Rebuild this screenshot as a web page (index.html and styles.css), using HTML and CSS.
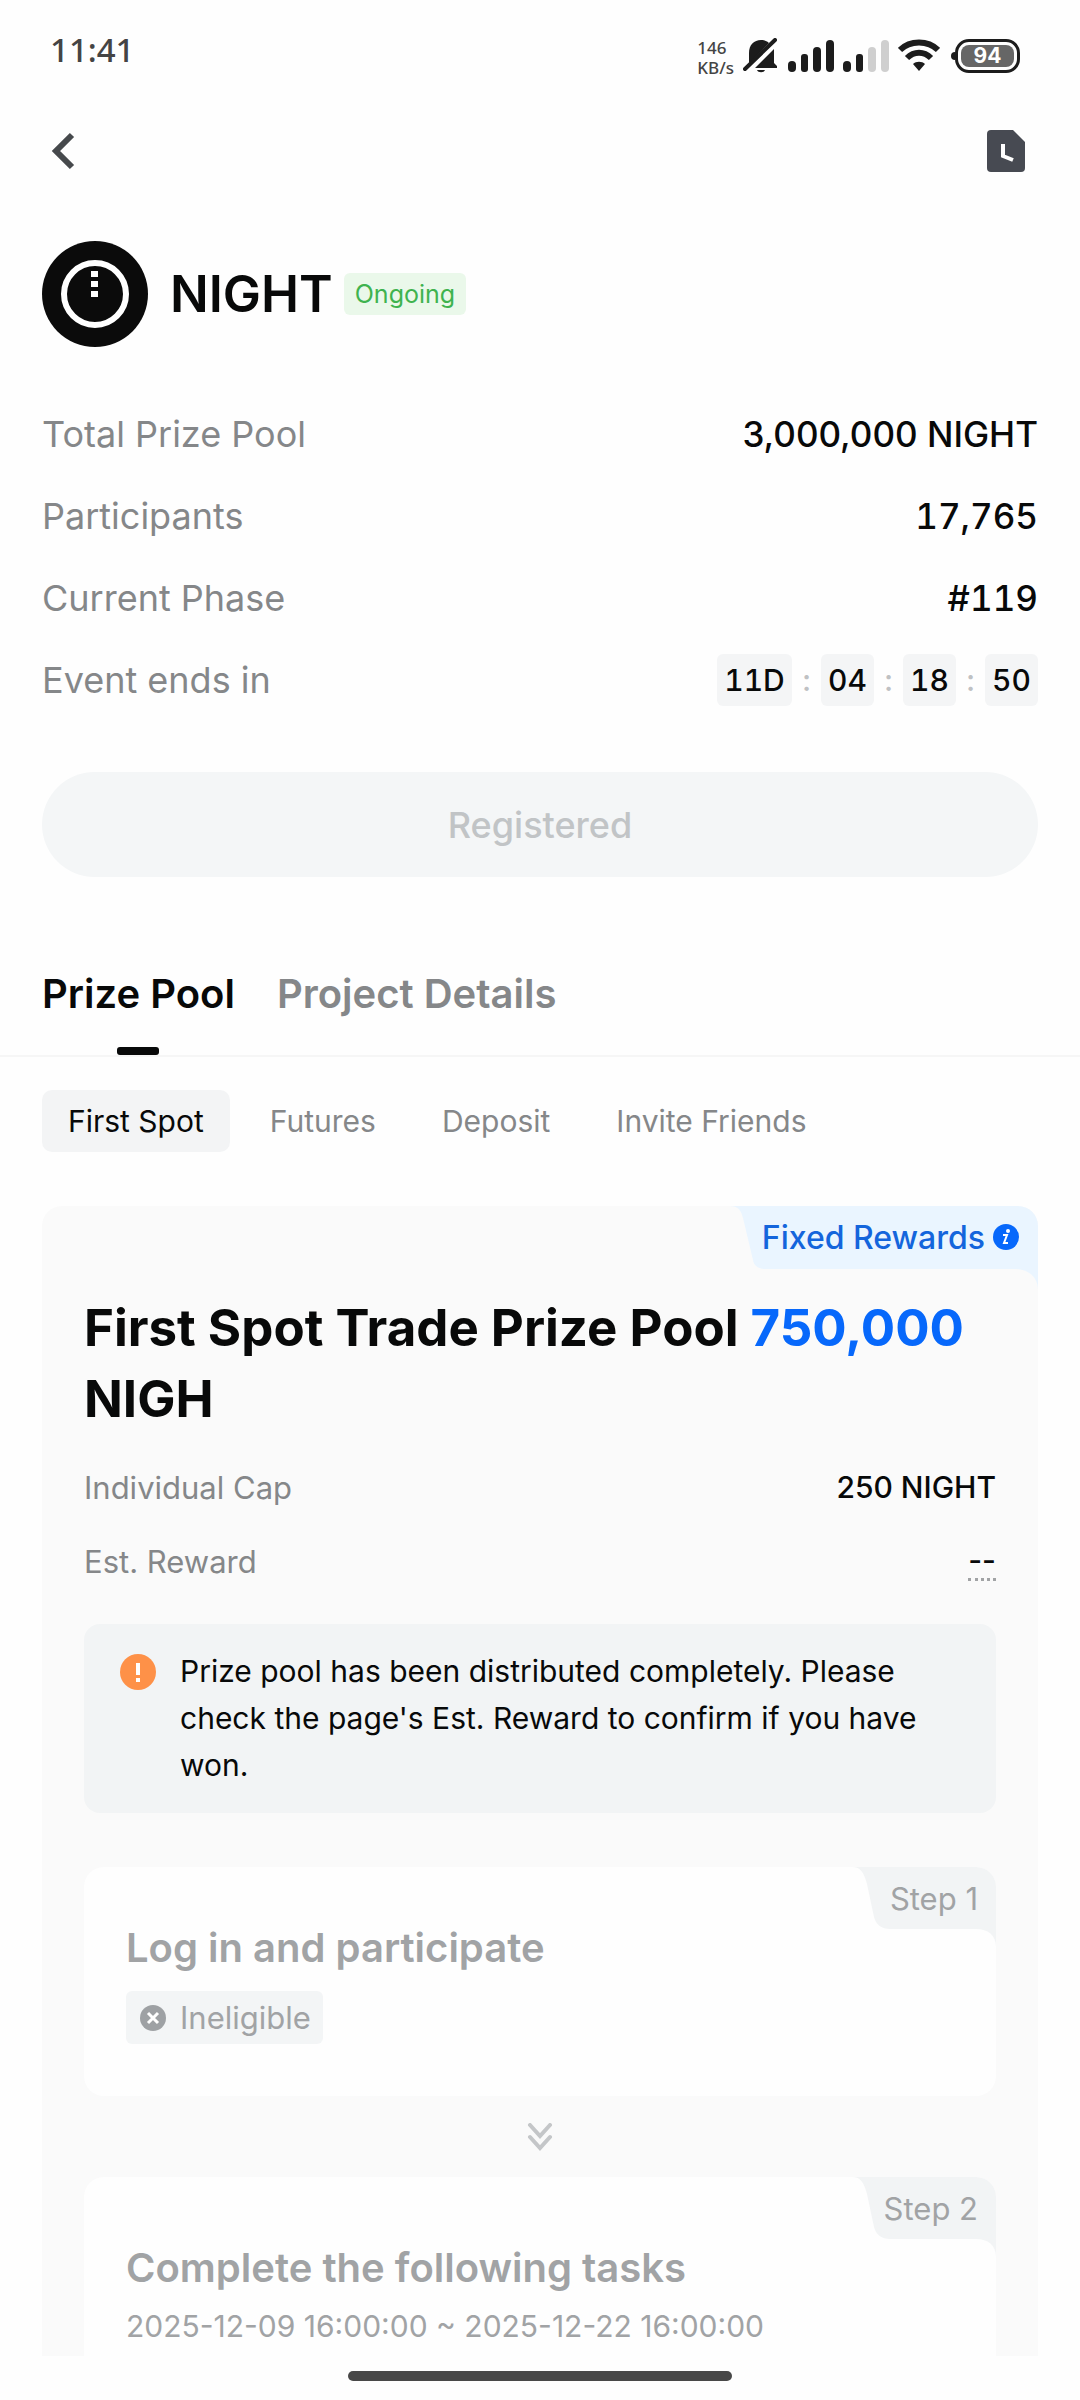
FILE: index.html
```html
<!DOCTYPE html>
<html lang="en">
<head>
  <meta charset="utf-8">
  <meta name="viewport" content="width=device-width, initial-scale=1">
  <title>NIGHT prize pool</title>
  <link rel="stylesheet" href="styles.css">
</head>
<body>
  <header class="status-bar">
    <time class="clock">11:41</time>
    <div class="status-icons">
      <div class="net-speed"><span>146</span><span>KB/s</span></div>
      <svg class="icon-bell" width="36" height="36" viewBox="0 0 36 36" fill="#1c1c1c">
        <path d="M6 26V15C6 7 11 2 18 2c3 0 6 1 8 3L6 26ZM31 11v14l3 3v2H12L31 11ZM14 32h8c-1 3-7 3-8 0Z"/>
        <path d="M2 31 32 2" stroke="#1c1c1c" stroke-width="4" stroke-linecap="round"/>
      </svg>
      <svg class="icon-signal" width="46" height="34" viewBox="0 0 46 34" fill="#1c1c1c">
        <rect x="0" y="22" width="8" height="11" rx="4"/><rect x="13" y="15" width="7" height="18" rx="3"/><rect x="25" y="8" width="8" height="25" rx="4"/><rect x="38" y="1" width="8" height="32" rx="4"/>
      </svg>
      <svg class="icon-signal" width="46" height="34" viewBox="0 0 46 34" fill="#1c1c1c">
        <rect x="0" y="22" width="8" height="11" rx="4"/><rect x="13" y="15" width="7" height="18" rx="3"/><rect x="25" y="8" width="8" height="25" rx="4" fill="#cfcfcf"/><rect x="38" y="1" width="8" height="32" rx="4" fill="#cfcfcf"/>
      </svg>
      <svg class="icon-wifi" width="42" height="34" viewBox="0 0 42 34" fill="none" stroke="#1c1c1c" stroke-width="6">
        <path d="M2 11C12 1 30 1 40 11"/><path d="M9 19C16 12 26 12 33 19"/>
        <path d="M15 25c3-3 9-3 12 0l-6 7Z" fill="#1c1c1c" stroke="none"/>
      </svg>
      <div class="battery"><span>94</span></div>
    </div>
  </header>

  <nav class="nav-bar" aria-label="Page">
    <button class="icon-button" type="button" aria-label="Back">
      <svg width="24" height="38" viewBox="0 0 24 38" fill="none" stroke="#46494c" stroke-width="6"><path d="M21 3 5 19l16 16"/></svg>
    </button>
    <button class="icon-button" type="button" aria-label="History">
      <svg width="38" height="42" viewBox="0 0 38 42"><path d="M4 0h22l12 12v26a4 4 0 0 1-4 4H4a4 4 0 0 1-4-4V4a4 4 0 0 1 4-4Z" fill="#474a52"/><path d="M16 14v12l10 4" fill="none" stroke="#fff" stroke-width="4"/></svg>
    </button>
  </nav>

  <main class="page">
    <section class="project">
      <svg class="logo" width="106" height="106" viewBox="0 0 106 106" aria-hidden="true">
        <circle cx="53" cy="53" r="53" fill="#0b0b0b"/>
        <circle cx="53" cy="53" r="31" fill="none" stroke="#fff" stroke-width="6"/>
        <path d="M49 30h7v6h-7zM49 40h7v6h-7zM49 50h7v6h-7z" fill="#fff"/>
      </svg>
      <h1 class="project-name">NIGHT</h1>
      <span class="tag-ongoing">Ongoing</span>
    </section>

    <dl class="stats">
      <div class="stat"><dt>Total Prize Pool</dt><dd>3,000,000 NIGHT</dd></div>
      <div class="stat"><dt>Participants</dt><dd class="count">17,765</dd></div>
      <div class="stat"><dt>Current Phase</dt><dd class="count">#119</dd></div>
      <div class="stat"><dt>Event ends in</dt>
        <dd class="countdown count"><span class="unit unit-days">11D</span><i>:</i><span class="unit">04</span><i>:</i><span class="unit">18</span><i>:</i><span class="unit">50</span></dd>
      </div>
    </dl>

    <button class="register" type="button" disabled>Registered</button>

    <div class="tabs" role="tablist">
      <button class="tab tab-active" type="button" role="tab" aria-selected="true">Prize Pool</button>
      <button class="tab" type="button" role="tab" aria-selected="false">Project Details</button>
    </div>

    <div class="subtabs" role="tablist">
      <button class="subtab subtab-active" type="button" role="tab" aria-selected="true">First Spot</button>
      <button class="subtab" type="button" role="tab" aria-selected="false">Futures</button>
      <button class="subtab" type="button" role="tab" aria-selected="false">Deposit</button>
      <button class="subtab" type="button" role="tab" aria-selected="false">Invite Friends</button>
    </div>

    <section class="pool">
      <div class="corner corner-fixed">
        <svg class="corner-shape" width="308" height="84" viewBox="0 0 308 84" aria-hidden="true"><path d="M0 0h288a20 20 0 0 1 20 20v64c0-12-8-21-24-21H36c-8 0-12-3-13-9L13 12C11 4 8 0 0 0Z" fill="#eaf5ff"/></svg>
        <span>Fixed Rewards</span>
        <svg width="26" height="26" viewBox="0 0 26 26" aria-hidden="true"><circle cx="13" cy="13" r="13" fill="#0768fb"/><path d="M10 11h4l-3 8h4" fill="none" stroke="#fff" stroke-width="2"/><circle cx="15" cy="7" r="2" fill="#fff"/></svg>
      </div>

      <h2 class="pool-title">First Spot Trade Prize Pool <em>750,000</em> NIGH</h2>
      <dl class="pool-stats">
        <div class="pool-stat"><dt>Individual Cap</dt><dd>250 NIGHT</dd></div>
        <div class="pool-stat"><dt>Est. Reward</dt><dd><span class="hint">--</span></dd></div>
      </dl>

      <div class="notice">
        <svg width="36" height="36" viewBox="0 0 36 36" aria-hidden="true"><circle cx="18" cy="18" r="18" fill="#fe9148"/><path d="M16 9h4v12h-4zM16 24h4v4h-4z" fill="#fff"/></svg>
        <p>Prize pool has been distributed completely. Please check the page's Est. Reward to confirm if you have won.</p>
      </div>

      <article class="step">
        <div class="corner corner-step">
          <svg class="corner-shape" width="144" height="80" viewBox="0 0 144 80" aria-hidden="true"><path d="M0 0h124a20 20 0 0 1 20 20v60c0-12-8-18-20-18H38c-8 0-14-4-16-12L15 17C12 6 9 0 0 0Z" fill="#f2f4f5"/></svg>
          <span>Step 1</span>
        </div>
        <h3>Log in and participate</h3>
        <span class="chip">
          <svg width="26" height="26" viewBox="0 0 26 26" aria-hidden="true"><circle cx="13" cy="13" r="13" fill="#9ea1a4"/><path d="m8 8 10 10M18 8 8 18" stroke="#fff" stroke-width="3"/></svg>
          Ineligible
        </span>
      </article>

      <div class="arrows">
        <svg width="26" height="28" viewBox="0 0 26 28" fill="none" stroke="#c4c6c8" stroke-width="4" stroke-linecap="round" aria-hidden="true"><path d="m3 2 10 11L23 2M3 14l10 11 10-11"/></svg>
      </div>

      <article class="step step-tasks">
        <div class="corner corner-step">
          <svg class="corner-shape" width="144" height="80" viewBox="0 0 144 80" aria-hidden="true"><path d="M0 0h124a20 20 0 0 1 20 20v60c0-12-8-18-20-18H38c-8 0-14-4-16-12L15 17C12 6 9 0 0 0Z" fill="#f2f4f5"/></svg>
          <span>Step 2</span>
        </div>
        <h3>Complete the following tasks</h3>
        <p class="dates">2025-12-09 16:00:00 ~ 2025-12-22 16:00:00</p>
      </article>
    </section>
  </main>

  <footer class="gesture-bar"><div class="gesture-handle"></div></footer>
</body>
</html>
```
FILE: styles.css
```css
* {
  box-sizing: border-box;
}

body {
  margin: 0;
  height: 100vh;
  display: flex;
  flex-direction: column;
  background: #fefefe;
  color: #080909;
  font-family: Inter, "Liberation Sans", sans-serif;
  font-size: 30px;
}

h1, h2, h3, p, dl, dd {
  margin: 0;
}

button {
  border: 0;
  padding: 0;
  background: none;
  color: inherit;
  font: inherit;
}

svg {
  display: block;
  flex: none;
}

/* System status bar */
.status-bar {
  flex: none;
  height: 112px;
  padding: 0 60px 0 50px;
  display: flex;
  align-items: center;
  justify-content: space-between;
}

.clock {
  padding-bottom: 12px;
  font: 500 33px/40px "Noto Sans", sans-serif;
  color: #444;
}

.status-icons {
  display: flex;
  align-items: center;
  gap: 9px;
}

.net-speed {
  display: flex;
  flex-direction: column;
  padding-top: 4px;
  font: 500 17px/20px "Noto Sans", sans-serif;
  color: #444;
}

.battery {
  position: relative;
  width: 65px;
  height: 34px;
  margin-left: 6px;
  padding: 3px;
  border: 3px solid #1c1c1c;
  border-radius: 14px;
}

.battery::before {
  content: "";
  position: absolute;
  left: -7px;
  top: 10px;
  width: 4px;
  height: 8px;
  border-radius: 4px 0 0 4px;
  background: #1c1c1c;
}

.battery span {
  display: block;
  border-radius: 8px;
  background: #666;
  color: #fff;
  font: 700 21px/22px Inter, sans-serif;
  text-align: center;
}

/* Navigation */
.nav-bar {
  flex: none;
  height: 78px;
  padding: 0 55px 0 51px;
  display: flex;
  align-items: center;
  justify-content: space-between;
}

.page {
  flex: 1;
  min-height: 0;
  overflow: hidden;
}

.project {
  display: flex;
  align-items: center;
  padding: 51px 42px 0;
}

.project-name {
  margin: 0 11px 0 22px;
  font-size: 51px;
  line-height: 60px;
  font-weight: 600;
}

.tag-ongoing {
  padding: 0 11px;
  border-radius: 6px;
  background: #eaf8ea;
  color: #3fb34f;
  font-size: 25px;
  line-height: 42px;
}

.stats {
  padding: 46px 42px 0;
}

.stat,
.pool-stat {
  display: flex;
  align-items: center;
  justify-content: space-between;
}

.stat {
  height: 82px;
  font-size: 36px;
}

dt {
  color: #858789;
}

dd {
  font-weight: 500;
}

.stat dd {
  font-size: 35px;
}

.count {
  font-variant-numeric: tabular-nums;
}

.stat .countdown {
  display: flex;
  font-size: 30px;
}

.countdown i {
  width: 29px;
  color: #bfc1c3;
  font-style: normal;
  line-height: 52px;
  text-align: center;
}

.unit {
  width: 53px;
  border-radius: 6px;
  background: #f4f5f6;
  line-height: 52px;
  text-align: center;
}

.unit-days {
  width: 75px;
}

.register {
  display: block;
  width: calc(100% - 84px);
  height: 105px;
  margin: 51px 42px 56px;
  border-radius: 53px;
  background: #f4f6f7;
  color: #c1c4c6;
  font-size: 36px;
  font-weight: 500;
}

/* Tabs */
.tabs {
  display: flex;
  gap: 42px;
  padding: 0 42px;
  border-bottom: 2px solid #f6f6f6;
}

.tab {
  position: relative;
  color: #858789;
  font-size: 40px;
  font-weight: 600;
  line-height: 122px;
}

.tab-active {
  color: #080909;
}

.tab-active::after {
  content: "";
  position: absolute;
  left: calc(50% - 21px);
  bottom: 0;
  width: 42px;
  height: 8px;
  border-radius: 3px;
  background: #080909;
}

.subtabs {
  display: flex;
  gap: 14px;
  padding: 33px 42px 54px;
}

.subtab {
  padding: 0 26px;
  border-radius: 10px;
  color: #858789;
  line-height: 62px;
}

.subtab-active {
  background: #f3f4f5;
  color: #080909;
}

/* Prize pool card */
.pool {
  position: relative;
  margin: 0 42px;
  padding: 86px 42px 42px;
  border-radius: 20px;
  background: #fafafa;
}

.corner {
  position: absolute;
  top: 0;
  right: 0;
  height: 62px;
  display: flex;
  align-items: center;
  justify-content: flex-end;
  gap: 8px;
}

.corner-fixed {
  padding-right: 19px;
  color: #1465dc;
  font-size: 32px;
  font-weight: 500;
}

.corner-step {
  padding-right: 18px;
  color: #a1a3a5;
  font-size: 31px;
}

.corner-shape {
  position: absolute;
  top: 0;
  right: 0;
}

.corner > :not(.corner-shape) {
  position: relative;
}

.pool-title {
  font-size: 51px;
  line-height: 71px;
  font-weight: 700;
}

.pool-title em {
  color: #0768fb;
  font-style: normal;
}

.pool-stats {
  padding: 16px 0 26px;
}

.pool-stat {
  height: 74px;
}

.pool-stat dt {
  font-size: 31px;
}

.hint {
  display: block;
  border-bottom: 3px dotted #a1a3a5;
  line-height: 36px;
}

.notice {
  display: flex;
  gap: 24px;
  padding: 24px 36px;
  border-radius: 16px;
  background: #f2f4f5;
  line-height: 47px;
}

.notice svg {
  margin-top: 6px;
}

.step {
  position: relative;
  padding: 53px 42px 52px;
  border-radius: 20px;
  background: #fefefe;
  color: #a1a3a5;
}

.notice + .step {
  margin-top: 54px;
}

.step h3 {
  font-size: 40px;
  line-height: 56px;
  font-weight: 600;
}

.chip {
  display: inline-flex;
  align-items: center;
  gap: 14px;
  height: 53px;
  margin-top: 15px;
  padding: 0 12px 0 14px;
  border-radius: 6px;
  background: #f3f5f6;
  font-size: 31px;
  vertical-align: top;
}

.arrows {
  display: flex;
  height: 81px;
  align-items: center;
  justify-content: center;
}

.step-tasks {
  padding-top: 63px;
}

.dates {
  margin-top: 7px;
  line-height: 46px;
}

.gesture-bar {
  flex: none;
  height: 44px;
  padding-top: 15px;
}

.gesture-handle {
  width: 384px;
  height: 10px;
  margin: 0 auto;
  border-radius: 5px;
  background: #484848;
}
```
